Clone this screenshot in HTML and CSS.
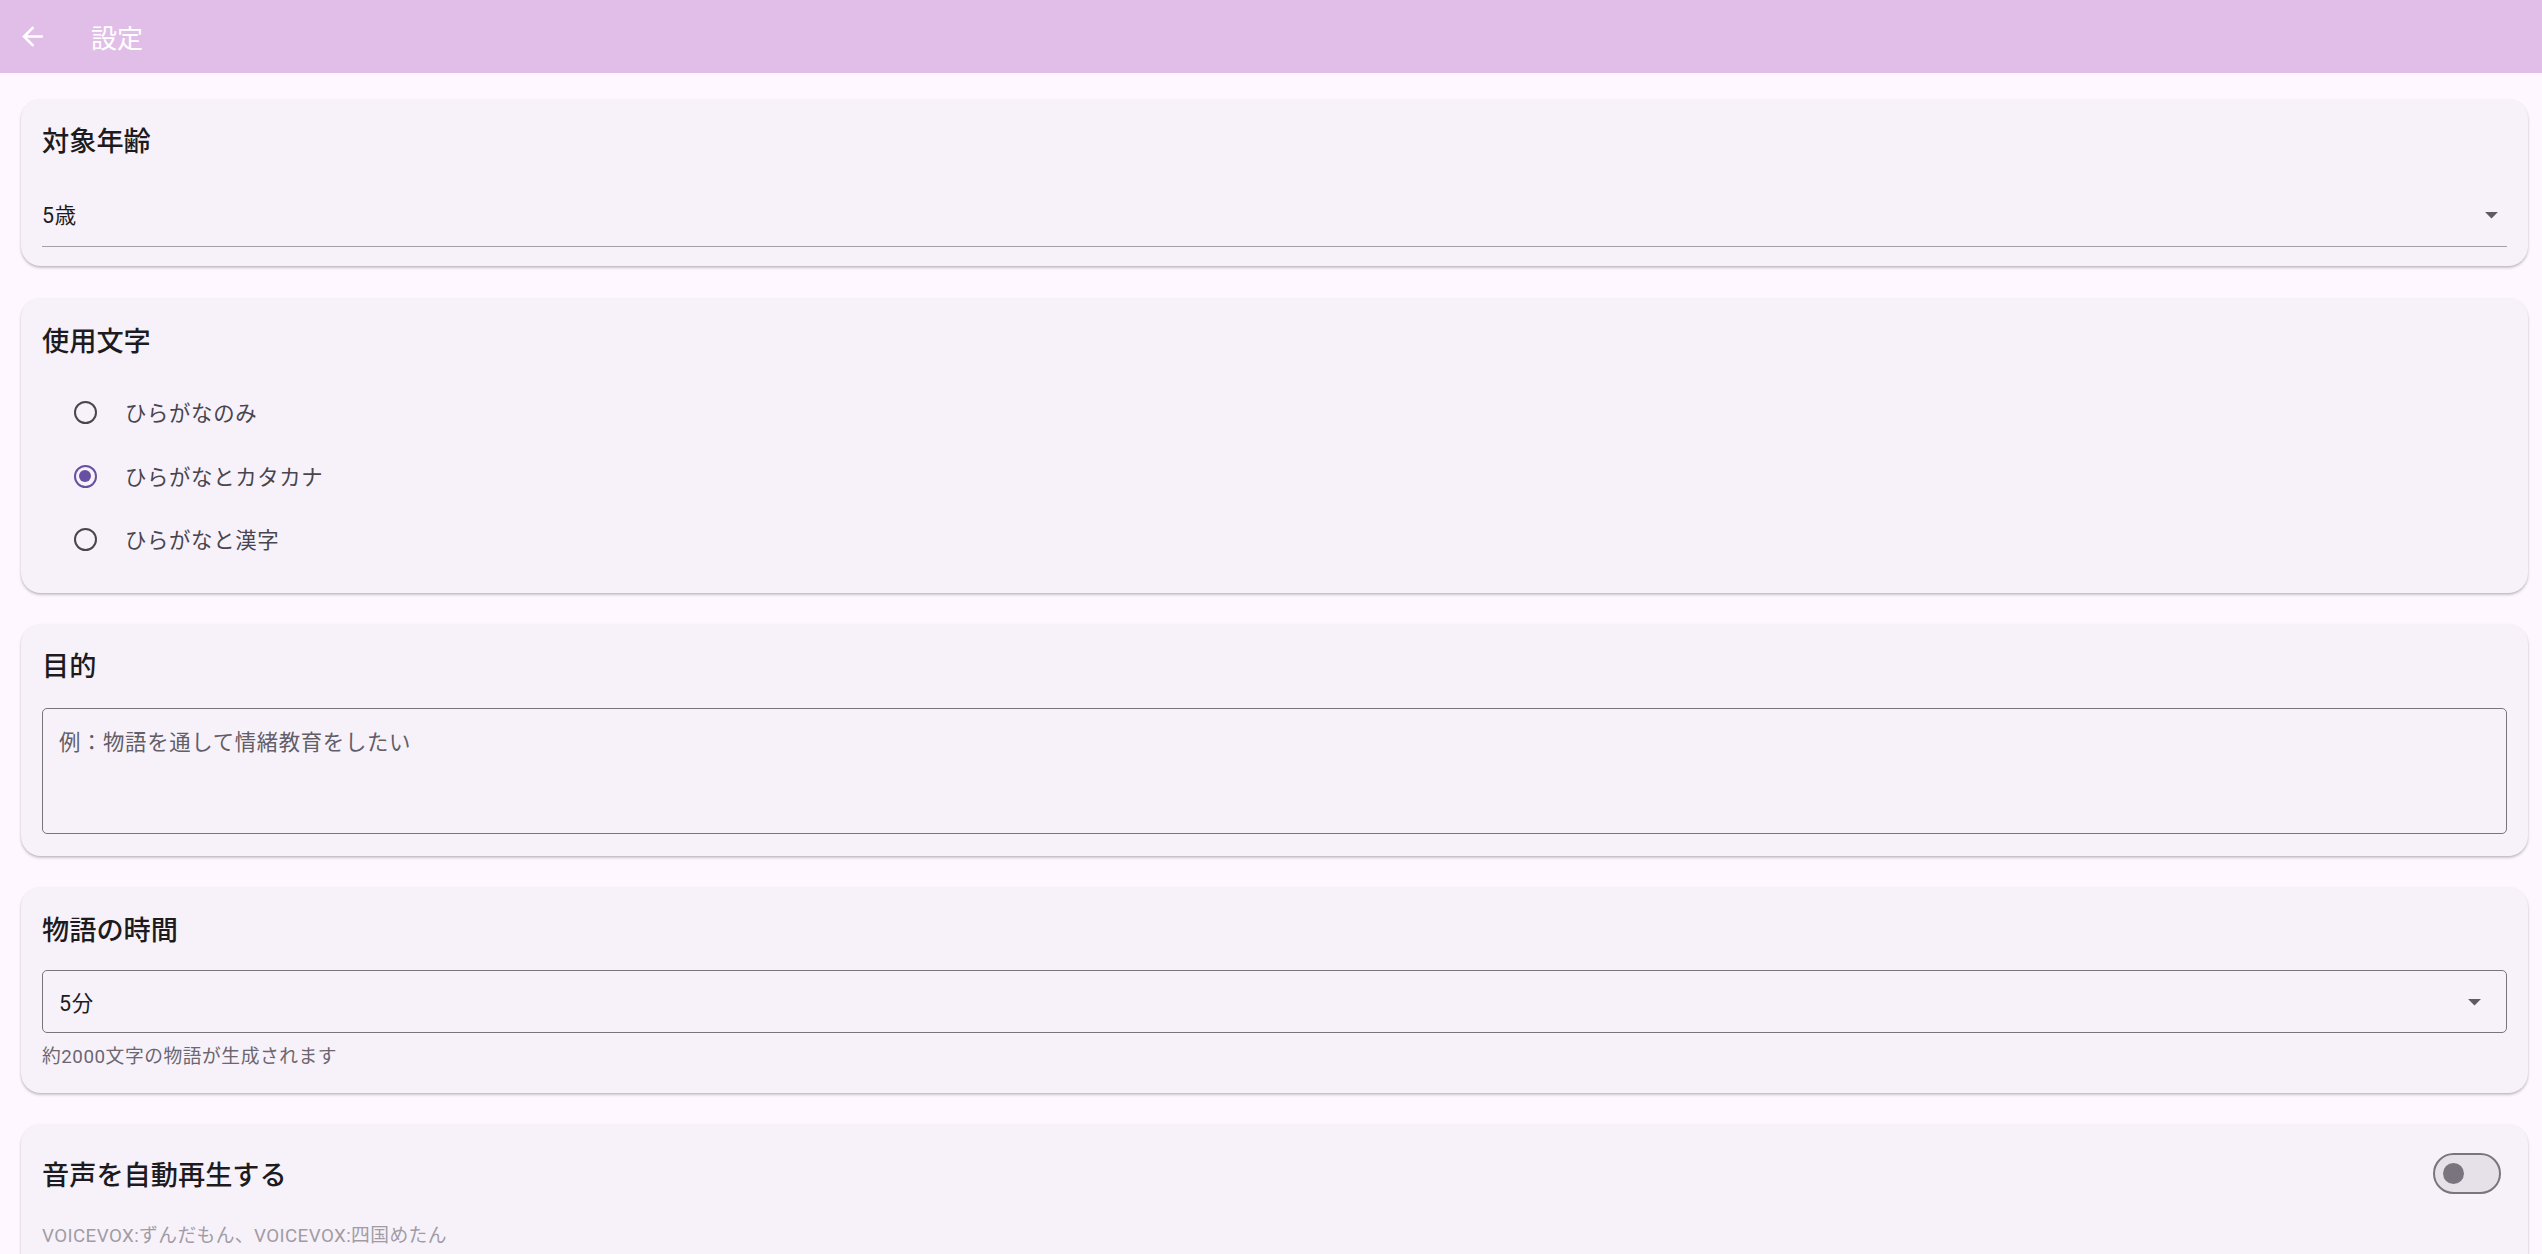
FILE: index.html
```html
<!DOCTYPE html>
<html lang="ja">
<head>
<meta charset="utf-8">
<title>設定</title>
<link rel="stylesheet" href="styles.css">
</head>
<body>
<header class="appbar">
  <svg class="back" viewBox="0 0 24 24" width="31" height="31"><path d="M20 11H7.83l5.59-5.59L12 4l-8 8 8 8 1.41-1.41L7.83 13H20v-2z" fill="#ffffff"/></svg>
  <div class="title">設定</div>
</header>
<main class="content">
  <section class="card card-age">
    <h2 class="heading">対象年齢</h2>
    <div class="dropdown-underline">
      <span class="value">5歳</span>
      <svg class="arrow" viewBox="0 0 24 24" width="31" height="31"><path d="M7 10l5 5 5-5z" fill="#5f5b63"/></svg>
    </div>
  </section>

  <section class="card card-chars">
    <h2 class="heading">使用文字</h2>
    <div class="radios">
      <div class="radio-row"><span class="radio"></span><span class="radio-label">ひらがなのみ</span></div>
      <div class="radio-row"><span class="radio selected"></span><span class="radio-label">ひらがなとカタカナ</span></div>
      <div class="radio-row"><span class="radio"></span><span class="radio-label">ひらがなと漢字</span></div>
    </div>
  </section>

  <section class="card card-purpose">
    <h2 class="heading">目的</h2>
    <div class="textarea"><div class="placeholder">例：物語を通して情緒教育をしたい</div></div>
  </section>

  <section class="card card-time">
    <h2 class="heading">物語の時間</h2>
    <div class="dropdown-outlined">
      <span class="value">5分</span>
      <svg class="arrow" viewBox="0 0 24 24" width="31" height="31"><path d="M7 10l5 5 5-5z" fill="#5f5b63"/></svg>
    </div>
    <div class="helper">約2000文字の物語が生成されます</div>
  </section>

  <section class="card card-voice">
    <div class="voice-row">
      <h2 class="heading">音声を自動再生する</h2>
      <span class="switch"><span class="thumb"></span></span>
    </div>
    <div class="voice-note">VOICEVOX:ずんだもん、VOICEVOX:四国めたん<br>VOICEVOX:春日部つむぎ、VOICEVOX:雨晴はう</div>
  </section>
</main>
</body>
</html>
```
FILE: styles.css
```css
html, body {
  margin: 0;
  padding: 0;
}
body {
  background: #fef7ff;
  font-family: "Roboto", "Noto Sans CJK JP", sans-serif;
  color: #1d1b20;
  height: 1254px;
  overflow: hidden;
}
.appbar {
  height: 73px;
  background: #e1bee7;
  display: flex;
  align-items: center;
}
.back {
  margin-left: 16.5px;
  flex: none;
}
.title {
  margin-left: 43.5px;
  color: #ffffff;
  font-family: "Noto Sans CJK JP", sans-serif;
  font-size: 26px;
  line-height: 1;
  font-weight: 400;
}
.content {
  padding: 26.3px 14px 0 21px;
  display: flex;
  flex-direction: column;
  gap: 31.4px;
}
.card {
  background: #f7f2fa;
  border-radius: 20px;
  box-shadow: 0 2px 3px rgba(0, 0, 0, 0.18), 0 1px 2px rgba(0, 0, 0, 0.1);
  padding: 27px 21px 20px 21px;
}
.heading {
  margin: 0;
  font-family: "Noto Sans CJK JP", sans-serif;
  font-size: 27.2px;
  line-height: 1;
  font-weight: 500;
  color: #1d1b20;
}
.value {
  font-size: 21.4px;
  letter-spacing: 0.65px;
  line-height: 1;
  padding-top: 4px;
  color: #1d1b20;
}
/* card 1 */
.card-age {
  padding-bottom: 19.9px;
}
.dropdown-underline {
  margin-top: 50px;
  height: 21px;
  padding-bottom: 21px;
  border-bottom: 1.5px solid #a49ea8;
  display: flex;
  align-items: center;
  justify-content: space-between;
}
.dropdown-underline .arrow {
  margin: -5px 0;
}
/* card 2 */
.card-chars {
  padding-top: 28px;
  padding-bottom: 21.5px;
}
.radios {
  margin-top: 28px;
  display: flex;
  flex-direction: column;
}
.radio-row {
  height: 63.5px;
  display: flex;
  align-items: center;
}
.radio {
  box-sizing: border-box;
  width: 23px;
  height: 23px;
  border-radius: 50%;
  border: 2.6px solid #49454f;
  margin-left: 31.5px;
  display: flex;
  align-items: center;
  justify-content: center;
  flex: none;
}
.radio.selected {
  border-color: #6750a4;
}
.radio.selected::after {
  content: "";
  width: 12px;
  height: 12px;
  border-radius: 50%;
  background: #6750a4;
}
.radio-label {
  margin-left: 28.5px;
  font-size: 21.4px;
  letter-spacing: 0.65px;
  line-height: 1;
  padding-top: 2px;
  color: #49454f;
}
/* card 3 */
.card-purpose {
  padding-bottom: 22px;
}
.textarea {
  margin-top: 29px;
  height: 126px;
  box-sizing: border-box;
  border: 1.3px solid #79747e;
  border-radius: 5px;
  padding: 23px 16px 0 16px;
}
.placeholder {
  font-size: 21.4px;
  letter-spacing: 0.65px;
  line-height: 1;
  color: #625d66;
}
/* card 4 */
.card-time {
  padding-top: 28px;
  padding-bottom: 26px;
}
.dropdown-outlined {
  margin-top: 28px;
  height: 63px;
  box-sizing: border-box;
  border: 1.3px solid #79747e;
  border-radius: 5px;
  padding: 0 16px 0 16px;
  display: flex;
  align-items: center;
  justify-content: space-between;
}
.helper {
  margin-top: 13px;
  padding-top: 2px;
  font-size: 18.75px;
  letter-spacing: 0.54px;
  line-height: 1;
  color: #6b6670;
}
/* card 5 */
.card-voice {
  padding-top: 29px;
  padding-bottom: 30px;
}
.voice-row {
  display: flex;
  align-items: center;
  justify-content: space-between;
  height: 41px;
}
.switch {
  box-sizing: border-box;
  width: 68px;
  height: 41px;
  margin-right: 6px;
  border-radius: 21px;
  border: 2.6px solid #79747e;
  background: #e6e0e9;
  display: flex;
  align-items: center;
  padding-left: 8px;
}
.thumb {
  width: 21px;
  height: 21px;
  border-radius: 50%;
  background: #79747e;
}
.voice-note {
  margin-top: 28px;
  font-size: 18.75px;
  letter-spacing: 0.4px;
  line-height: 29px;
  color: #a19ca4;
}
```
